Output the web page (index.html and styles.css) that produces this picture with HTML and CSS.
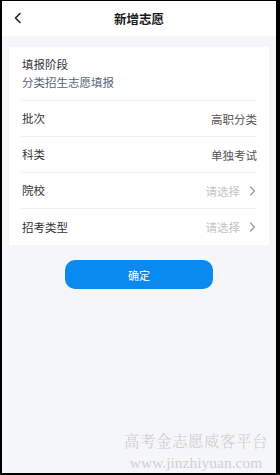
FILE: index.html
```html
<!DOCTYPE html>
<html lang="zh">
<head>
<meta charset="utf-8">
<link rel="stylesheet" href="styles.css">
</head>
<body>
<div class="screen">
  <header class="nav">
    <span class="back">
      <svg width="10" height="12" viewBox="0 0 10 12"><path d="M7 1.5 L2.5 6 L7 10.5" fill="none" stroke="#222" stroke-width="1.6" stroke-linecap="round" stroke-linejoin="round"/></svg>
    </span>
    <h1 class="title">新增志愿</h1>
  </header>
  <main class="content">
    <section class="card">
      <div class="stage">
        <div class="label">填报阶段</div>
        <div class="stage-value">分类招生志愿填报</div>
      </div>
      <div class="row"><span class="label">批次</span><span class="value">高职分类</span></div>
      <div class="row"><span class="label">科类</span><span class="value">单独考试</span></div>
      <div class="row"><span class="label">院校</span><span class="placeholder">请选择<svg class="chev" width="7" height="10" viewBox="0 0 7 10"><path d="M1.5 1 L5.5 5 L1.5 9" fill="none" stroke="#9a9a9a" stroke-width="1.2" stroke-linecap="round" stroke-linejoin="round"/></svg></span></div>
      <div class="row"><span class="label">招考类型</span><span class="placeholder">请选择<svg class="chev" width="7" height="10" viewBox="0 0 7 10"><path d="M1.5 1 L5.5 5 L1.5 9" fill="none" stroke="#9a9a9a" stroke-width="1.2" stroke-linecap="round" stroke-linejoin="round"/></svg></span></div>
    </section>
    <div class="actions"><button class="submit">确定</button></div>
    <div class="watermark">
      <div class="wm-cn">高考金志愿威客平台</div>
      <div class="wm-en">www.jinzhiyuan.com</div>
    </div>
  </main>
</div>
</body>
</html>
```

FILE: styles.css
```css
html { background: #000; }
* { box-sizing: border-box; }
body {
  margin: 1px 4px 2px 2px;
  height: 472px;
  font-family: "Noto Sans CJK SC", "Noto Sans", sans-serif;
  color: #333;
}
.screen {
  height: 100%;
  background: #f5f6f8;
  display: flex;
  flex-direction: column;
}
.nav {
  height: 35px;
  background: #fff;
  display: flex;
  align-items: center;
  justify-content: center;
  position: relative;
}
.back {
  position: absolute;
  left: 11px;
  top: 11px;
  display: flex;
}
.title {
  margin: 0;
  font-size: 12.5px;
  font-weight: 700;
  color: #1a1a1a;
}
.content {
  flex: 1;
  display: flex;
  flex-direction: column;
  padding: 11px 7px 0 7px;
}
.card {
  background: #fff;
  padding: 0 12px;
  border-radius: 2px;
}
.stage {
  padding: 9px 0 9px 1px;
  border-bottom: 1px solid #f0f0f0;
  display: flex;
  flex-direction: column;
  gap: 1px;
}
.label { font-size: 11.5px; color: #333; line-height: 17px; }
.stage-value { font-size: 11.5px; color: #55657a; line-height: 17px; }
.row {
  height: 36px;
  display: flex;
  align-items: center;
  justify-content: space-between;
  padding-left: 1px;
  border-bottom: 1px solid #f0f0f0;
}
.row:last-child { border-bottom: none; }
.value { font-size: 11.5px; color: #555; }
.placeholder {
  font-size: 11.5px;
  color: #c4c4c4;
  display: flex;
  align-items: center;
  gap: 9px;
}
.chev { margin-right: 1px; }
.actions {
  display: flex;
  justify-content: center;
  padding: 15px 0 0 0;
}
.submit {
  width: 148px;
  height: 29px;
  border: none;
  border-radius: 10px;
  background: #0a89ef;
  color: #fff;
  font-family: inherit;
  font-size: 11px;
}
.watermark {
  margin-top: auto;
  margin-bottom: 0;
  align-self: flex-end;
  text-align: center;
  font-family: "Liberation Serif", "Noto Serif CJK SC", serif;
  color: #d0d0d0;
  padding-right: 1px;
}
.wm-cn { font-size: 15.5px; letter-spacing: 0.5px; line-height: 21px; }
.wm-en { font-size: 15.5px; line-height: 21px; }
```
